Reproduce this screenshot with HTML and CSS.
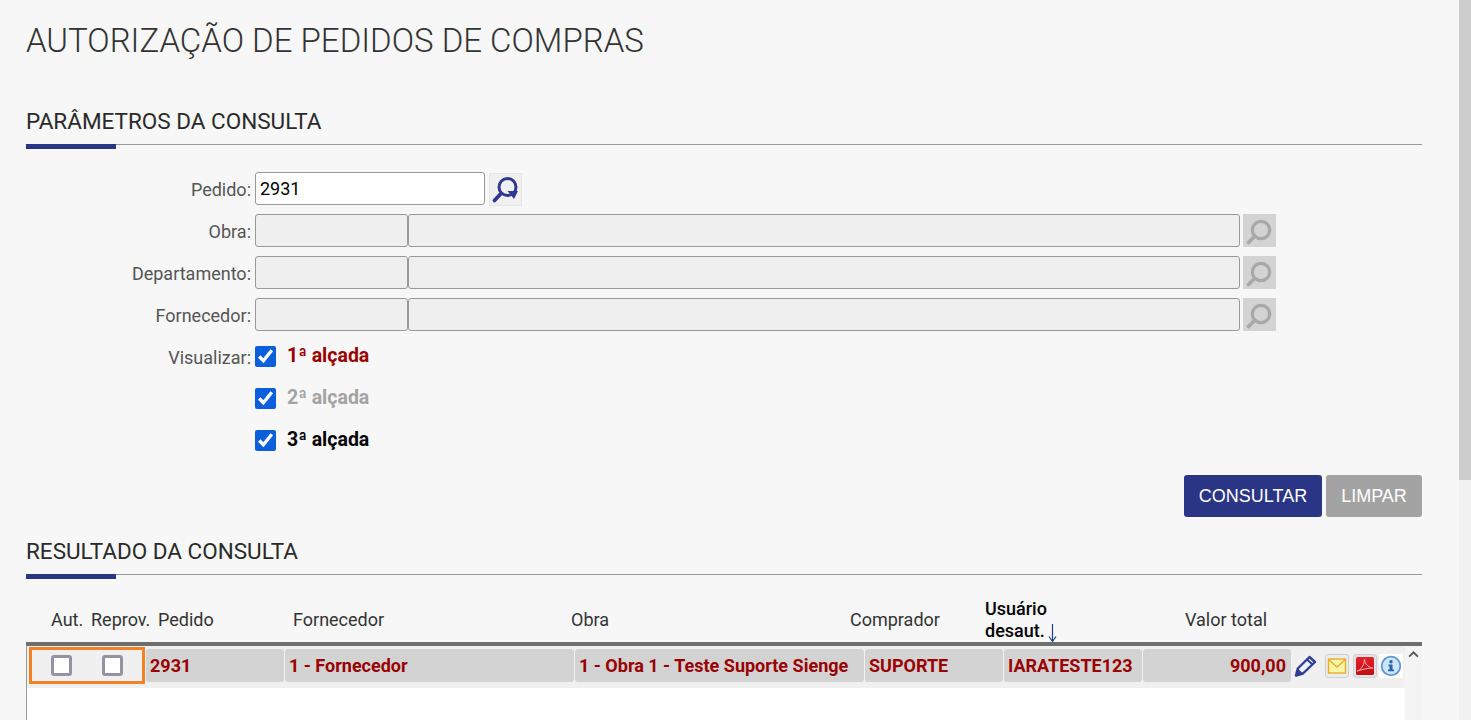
FILE: index.html
```html
<!DOCTYPE html>
<html lang="pt-BR">
<head>
<meta charset="utf-8">
<title>Autorização de pedidos de compras</title>
<link rel="stylesheet" href="styles.css">
</head>
<body>
<svg class="defs" width="0" height="0" aria-hidden="true">
  <symbol id="lens" viewBox="0 0 33 33">
    <circle cx="18" cy="16" r="8.700" fill="none" stroke="currentColor" stroke-width="3.200"/>
    <path d="M11.500 22.500 5.500 28.500" fill="none" stroke="currentColor" stroke-width="3.600" stroke-linecap="round"/>
  </symbol>
  <linearGradient id="pdfred" x1="0" y1="0" x2="0" y2="1">
    <stop offset="0" stop-color="#e8202a"/>
    <stop offset="1" stop-color="#c00d15"/>
  </linearGradient>
</svg>
<main class="page">
  <h1 class="title">AUTORIZAÇÃO DE PEDIDOS DE COMPRAS</h1>

  <h2 class="section section-first">PARÂMETROS DA CONSULTA</h2>
  <form class="form">
    <div class="row">
      <label class="label">Pedido:</label>
      <input class="input input-main" value="2931">
      <button type="button" class="lookup lookup-on">
        <svg class="lookup-icon" viewBox="0 0 33 33">
          <circle cx="18.500" cy="14" r="8.500" fill="none" stroke="#2f3a8e" stroke-width="3"/>
          <path d="M12 20.500 5.500 27.500" fill="none" stroke="#2f3a8e" stroke-width="3.800" stroke-linecap="round"/>
          <path d="M18.500 18h10.500l-4 8z" fill="#2f3a8e"/>
        </svg>
      </button>
    </div>
    <div class="row">
      <label class="label">Obra:</label>
      <input class="input input-code" disabled><input class="input input-desc" disabled>
      <button type="button" class="lookup lookup-off"><svg class="lookup-icon"><use href="#lens"/></svg></button>
    </div>
    <div class="row">
      <label class="label">Departamento:</label>
      <input class="input input-code" disabled><input class="input input-desc" disabled>
      <button type="button" class="lookup lookup-off"><svg class="lookup-icon"><use href="#lens"/></svg></button>
    </div>
    <div class="row">
      <label class="label">Fornecedor:</label>
      <input class="input input-code" disabled><input class="input input-desc" disabled>
      <button type="button" class="lookup lookup-off"><svg class="lookup-icon"><use href="#lens"/></svg></button>
    </div>
    <div class="row">
      <label class="label">Visualizar:</label>
      <input type="checkbox" class="check" checked>
      <span class="level level-1">1ª alçada</span>
    </div>
    <div class="row">
      <span class="label"></span>
      <input type="checkbox" class="check" checked>
      <span class="level level-2">2ª alçada</span>
    </div>
    <div class="row">
      <span class="label"></span>
      <input type="checkbox" class="check" checked>
      <span class="level level-3">3ª alçada</span>
    </div>
    <div class="actions">
      <button type="button" class="btn btn-primary">CONSULTAR</button>
      <button type="button" class="btn btn-muted">LIMPAR</button>
    </div>
  </form>

  <h2 class="section">RESULTADO DA CONSULTA</h2>
  <section class="results">
    <div class="thead">
      <span class="th th-aut">Aut.</span>
      <span class="th th-rep">Reprov.</span>
      <span class="th th-ped">Pedido</span>
      <span class="th th-for">Fornecedor</span>
      <span class="th th-obr">Obra</span>
      <span class="th th-com">Comprador</span>
      <span class="th th-usu">Usuário<br>desaut.<svg class="sort" viewBox="0 0 9 18"><path d="M4.500 0v17M1 12.500l3.500 5 3.500-5" fill="none" stroke="#1d3f8a" stroke-width="1.200"/></svg></span>
      <span class="th th-val">Valor total</span>
    </div>
    <div class="tbody">
      <div class="tcontent">
        <div class="trow">
          <div class="picks">
            <input type="checkbox" class="pick">
            <input type="checkbox" class="pick">
          </div>
          <span class="cell cell-ped">2931</span>
          <span class="cell cell-for">1 - Fornecedor</span>
          <span class="cell cell-obr">1 - Obra 1 - Teste Suporte Sienge</span>
          <span class="cell cell-com">SUPORTE</span>
          <span class="cell cell-usu">IARATESTE123</span>
          <span class="cell cell-val">900,00</span>
          <div class="tools">
            <svg class="tool tool-pen" viewBox="0 0 24 24">
              <path d="M3 21.500 4.800 14.500 16.500 3l5.500 5L10 19.500z" fill="#eef0fa" stroke="#2f3d94" stroke-width="2.400" stroke-linejoin="round"/>
              <path d="M14 5.500l5.500 5" stroke="#2f3d94" stroke-width="2"/>
              <path d="M3 21.500 4.800 14.500l5.200 5z" fill="#2f3d94"/>
            </svg>
            <svg class="tool tool-mail" viewBox="0 0 24 24">
              <rect x=".5" y=".5" width="23" height="23" rx="2.500" fill="#ececec" stroke="#cfcfcf"/>
              <rect x="3.500" y="5" width="17" height="14" fill="#fdf6a8" stroke="#e8ad2c" stroke-width="1.400"/>
              <path d="M3.500 5.500 12 13l8.500-7.500" fill="none" stroke="#e8ad2c" stroke-width="1.400"/>
            </svg>
            <svg class="tool tool-pdf" viewBox="0 0 24 24">
              <rect x=".5" y=".5" width="23" height="23" rx="2.500" fill="#e4e4e4" stroke="#cfcfcf"/>
              <rect x="3" y="3" width="18" height="18" rx="1.500" fill="url(#pdfred)"/>
              <path d="M4 17c4-1 7-5 7.500-12 .5 5 3 8 8.500 9-4 0-9 1-16 3z" fill="none" stroke="#f3b0b0" stroke-width="1"/>
            </svg>
            <svg class="tool tool-info" viewBox="0 0 24 24">
              <rect width="24" height="24" fill="#fff"/>
              <circle cx="12" cy="12" r="9.300" fill="#cde5fa" stroke="#5b94d8" stroke-width="1.800"/>
              <circle cx="12" cy="7.800" r="1.700" fill="#2b62a8"/>
              <path d="M9.500 10.500h4v5h1.500v1.800H9v-1.800h1.500v-3.200h-1z" fill="#2b62a8"/>
            </svg>
          </div>
        </div>
        <div class="tblank"></div>
      </div>
      <div class="inner-scroll">
        <svg class="inner-arrow" viewBox="0 0 10 6"><path d="M1 5l4-4 4 4" fill="none" stroke="#555" stroke-width="1.600"/></svg>
      </div>
    </div>
  </section>
</main>
<aside class="scrollbar"><div class="scrollbar-thumb"></div></aside>
</body>
</html>
```
FILE: styles.css
```css
* { box-sizing: border-box; }
html, body { margin: 0; height: 720px; overflow: hidden; }
body {
  display: flex;
  background: #f7f7f7;
  font-family: Roboto, "Liberation Sans", sans-serif;
  color: #444;
}
.defs { position: absolute; }
.page { width: 1459px; padding: 0 37px 0 26px; flex: none; }
.scrollbar { width: 12px; background: #f1f1f1; flex: none; }
.scrollbar-thumb { height: 480px; background: #cdcdcd; }

.title {
  margin: 0;
  padding-top: 22px;
  height: 59px;
  font-size: 33px;
  line-height: 38px;
  font-weight: 300;
  color: #333;
}
.section {
  position: relative;
  margin: 0;
  height: 41px;
  padding-top: 5px;
  font-size: 22.5px;
  line-height: 24px;
  font-weight: 400;
  color: #2a2a2a;
  border-bottom: 1px solid #999;
}
.section::after {
  content: "";
  position: absolute;
  left: 0;
  bottom: -5px;
  width: 90px;
  height: 5px;
  background: #2b3585;
}
.section-first { margin-top: 45px; }

.form { padding-top: 27px; }
.row { display: flex; align-items: center; height: 33px; margin-bottom: 9px; }
.label {
  width: 229px;
  padding-right: 4px;
  padding-top: 2px;
  text-align: right;
  font-size: 18px;
  color: #555;
  flex: none;
}
.input {
  height: 33px;
  border: 1px solid #999;
  border-radius: 3px;
  padding: 0 4px;
  font: 18px Roboto, sans-serif;
  color: #000;
  background: #fff;
  outline: 0;
  flex: none;
}
.input-main { width: 230px; }
.input-code { width: 153px; background: #efefef; }
.input-desc { width: 832px; background: #efefef; }
.lookup {
  width: 33px;
  height: 33px;
  margin-left: 3px;
  padding: 0;
  border: 0;
  display: block;
  flex: none;
}
.lookup-on { background: #f0f0f0; margin-left: 4px; margin-top: 2px; box-shadow: inset 0 0 0 1px #e6e6e6; }
.lookup-off { background: #d3d3d3; color: #a8a8a8; }
.lookup-icon { display: block; width: 33px; height: 33px; }

.check {
  width: 21px;
  height: 21px;
  margin: 0;
  accent-color: #0b5fdc;
  flex: none;
}
.level { margin-left: 11px; font-size: 19.5px; font-weight: 700; position: relative; top: -1px; }
.level-1 { color: #9a0000; }
.level-2 { color: #a3a3a3; }
.level-3 { color: #000; }

.actions { display: flex; justify-content: flex-end; gap: 4px; margin-top: 18px; }
.btn {
  height: 42px;
  border: 0;
  border-radius: 3px;
  color: #fff;
  font: 18px "Liberation Sans", Arial, sans-serif;
  padding: 0;
}
.btn-primary { width: 138px; background: #2b3585; }
.btn-muted { width: 96px; background: #a3a3a3; }
.form + .section { margin-top: 17px; }

.results { margin-top: 19px; }
.thead {
  display: grid;
  grid-template-columns: 25px 40px 67px 135px 278px 279px 135px 200px 1fr;
  height: 52px;
  padding-top: 3px;
  border-bottom: 4px solid #6e6e6e;
  align-items: center;
  font-size: 18px;
  line-height: 22px;
  color: #333;
}
.th { white-space: nowrap; }
.th-aut { grid-column: 2; }
.th-rep { grid-column: 3; }
.th-ped { grid-column: 4; }
.th-for { grid-column: 5; }
.th-obr { grid-column: 6; }
.th-com { grid-column: 7; }
.th-usu { grid-column: 8; color: #000; font-weight: 500; }
.th-val { grid-column: 9; }
.sort { width: 9px; height: 18px; margin-left: 3px; vertical-align: -5px; }

.tbody {
  display: flex;
  height: 74px;
  background: #f0f0f0;
}
.tcontent { width: 1379px; flex: none; display: flex; flex-direction: column; border-left: 1px solid #999; }
.trow {
  height: 42px;
  flex: none;
  display: grid;
  grid-template-columns: 116px 138px 289px 289px 138px 138px 148px 1fr;
  column-gap: 1px;
  padding-left: 2px;
  padding-top: 3px;
  align-items: start;
}
.picks {
  height: 37px;
  border: 3px solid #f58127;
  margin-top: -2px;
  display: flex;
  gap: 30px;
  padding-left: 19px;
  align-items: center;
}
.pick {
  appearance: none;
  width: 21px;
  height: 21px;
  margin: 0;
  background: #fff;
  border: 3px solid #9393a3;
  border-radius: 3px;
  flex: none;
}
.cell {
  height: 33px;
  background: #d3d3d3;
  border-radius: 3px;
  color: #9a0000;
  font-size: 18px;
  font-weight: 700;
  line-height: 33px;
  padding-left: 4px;
  white-space: nowrap;
  overflow: hidden;
}
.cell-val { text-align: right; padding-right: 5px; }
.tools { display: flex; align-items: center; height: 33px; margin-left: 1px; }
.tool { display: block; flex: none; width: 24px; height: 24px; }
.tool-mail { margin-left: 8px; }
.tool-pdf { margin-left: 4px; }
.tool-info { margin-left: 2px; }
.tblank { flex: 1; background: #fff; }
.inner-scroll { flex: 1; display: flex; justify-content: center; background: #f4f4f4; padding-top: 5px; }
.inner-arrow { width: 11px; height: 7px; display: block; }
```
